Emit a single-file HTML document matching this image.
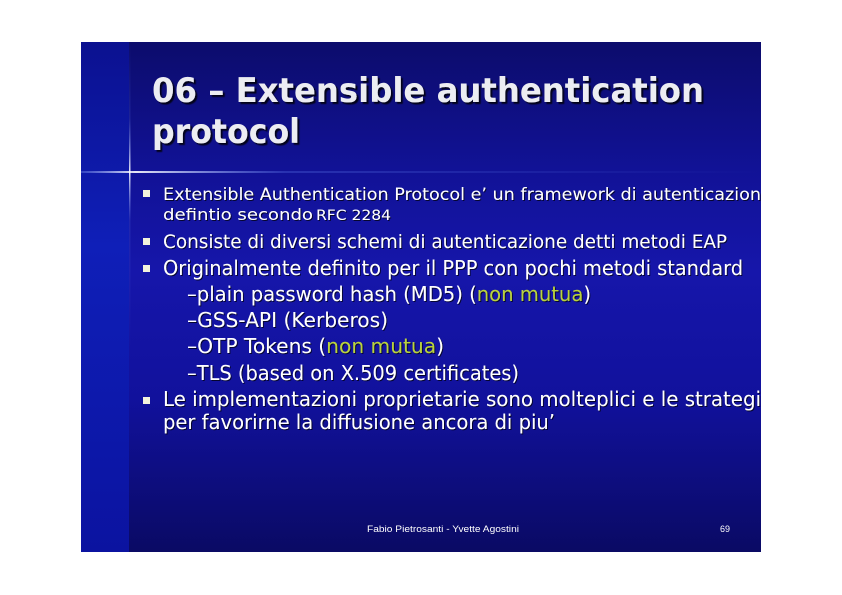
<!DOCTYPE html>
<html><head><meta charset="utf-8"><style>
html,body{margin:0;padding:0;background:#fff;width:842px;height:595px;overflow:hidden}
svg{position:absolute;left:0;top:0}
</style></head><body>
<svg width="842" height="595" viewBox="0 0 842 595" xmlns="http://www.w3.org/2000/svg">
<defs>
<linearGradient id="bg" x1="0" y1="0" x2="0" y2="1">
<stop offset="0" stop-color="#0c0c6c"/>
<stop offset="0.25" stop-color="#111296"/>
<stop offset="0.45" stop-color="#1616aa"/>
<stop offset="0.7" stop-color="#11119c"/>
<stop offset="1" stop-color="#0a0a64"/>
</linearGradient>
<linearGradient id="lb" x1="0" y1="0" x2="0" y2="1">
<stop offset="0" stop-color="#0b1190"/>
<stop offset="0.4" stop-color="#0f1fb8"/>
<stop offset="1" stop-color="#0b13a0"/>
</linearGradient>
<linearGradient id="hl" x1="0" y1="0" x2="1" y2="0">
<stop offset="0" stop-color="#8fa8ff" stop-opacity="0.3"/>
<stop offset="0.08" stop-color="#ffffff" stop-opacity="0.9"/>
<stop offset="0.3" stop-color="#6f8fff" stop-opacity="0.25"/>
<stop offset="1" stop-color="#6f8fff" stop-opacity="0"/>
</linearGradient>
<linearGradient id="vl" x1="0" y1="0" x2="0" y2="1">
<stop offset="0" stop-color="#6f8fff" stop-opacity="0"/>
<stop offset="0.15" stop-color="#6f8fff" stop-opacity="0.15"/>
<stop offset="0.255" stop-color="#ffffff" stop-opacity="0.9"/>
<stop offset="0.35" stop-color="#6f8fff" stop-opacity="0.15"/>
<stop offset="0.6" stop-color="#6f8fff" stop-opacity="0"/>
</linearGradient>
<clipPath id="cp"><rect x="81" y="42" width="680" height="510"/></clipPath>
<filter id="sh"><feDropShadow dx="2" dy="2" stdDeviation="0.6" flood-color="#000" flood-opacity="0.8"/></filter>
<filter id="sh2"><feDropShadow dx="1" dy="1" stdDeviation="0.3" flood-color="#000" flood-opacity="0.7"/></filter>
</defs>
<g clip-path="url(#cp)">
<rect x="81" y="42" width="680" height="510" fill="url(#bg)"/>
<rect x="81" y="42" width="48" height="510" fill="url(#lb)"/>
<rect x="81" y="171" width="680" height="2" fill="url(#hl)"/>
<rect x="129" y="42" width="1.5" height="510" fill="url(#vl)"/>
<g font-family="'DejaVu Sans', 'Liberation Sans', sans-serif" font-weight="bold" fill="#ecedf2" filter="url(#sh)" font-size="34">
<text x="152" y="102" textLength="552" lengthAdjust="spacingAndGlyphs">06 – Extensible authentication</text>
<text x="152" y="143" textLength="148" lengthAdjust="spacingAndGlyphs">protocol</text>
</g>
<g fill="#f2f2dc">
<rect x="143" y="190" width="7" height="7"/>
<rect x="143" y="238" width="7" height="7"/>
<rect x="143" y="265" width="7" height="7"/>
<rect x="143" y="397" width="7" height="7"/>
</g>
<g font-family="'DejaVu Sans', 'Liberation Sans', sans-serif" fill="#ffffff" filter="url(#sh2)">
<text x="163" y="200" font-size="17" textLength="598" lengthAdjust="spacingAndGlyphs">Extensible Authentication Protocol e’ un framework di autenticazion</text>
<text x="163" y="220" font-size="16" textLength="150" lengthAdjust="spacingAndGlyphs">defintio secondo</text>
<text x="316" y="220" font-size="14" textLength="75" lengthAdjust="spacingAndGlyphs">RFC 2284</text>
<text x="163" y="248" font-size="19" textLength="564" lengthAdjust="spacingAndGlyphs">Consiste di diversi schemi di autenticazione detti metodi EAP</text>
<text x="163" y="275" font-size="20" textLength="580" lengthAdjust="spacingAndGlyphs">Originalmente definito per il PPP con pochi metodi standard</text>
<text x="187" y="301" font-size="20" textLength="404" lengthAdjust="spacingAndGlyphs">–plain password hash (MD5) (<tspan fill="#b9d23c">non mutua</tspan>)</text>
<text x="187" y="327" font-size="20" textLength="201" lengthAdjust="spacingAndGlyphs">–GSS-API (Kerberos)</text>
<text x="187" y="353" font-size="20" textLength="257" lengthAdjust="spacingAndGlyphs">–OTP Tokens (<tspan fill="#b9d23c">non mutua</tspan>)</text>
<text x="187" y="380" font-size="20" textLength="332" lengthAdjust="spacingAndGlyphs">–TLS (based on X.509 certificates)</text>
<text x="163" y="406" font-size="20" textLength="598" lengthAdjust="spacingAndGlyphs">Le implementazioni proprietarie sono molteplici e le strategi</text>
<text x="163" y="429" font-size="20" textLength="392" lengthAdjust="spacingAndGlyphs">per favorirne la diffusione ancora di piu’</text>
</g>
<g font-family="'Liberation Sans', sans-serif" fill="#ffffff" font-size="9">
<text x="367" y="532" textLength="152" lengthAdjust="spacingAndGlyphs">Fabio Pietrosanti - Yvette Agostini</text>
<text x="720" y="532" textLength="10" lengthAdjust="spacingAndGlyphs">69</text>
</g>
</g>
</svg>
</body></html>
